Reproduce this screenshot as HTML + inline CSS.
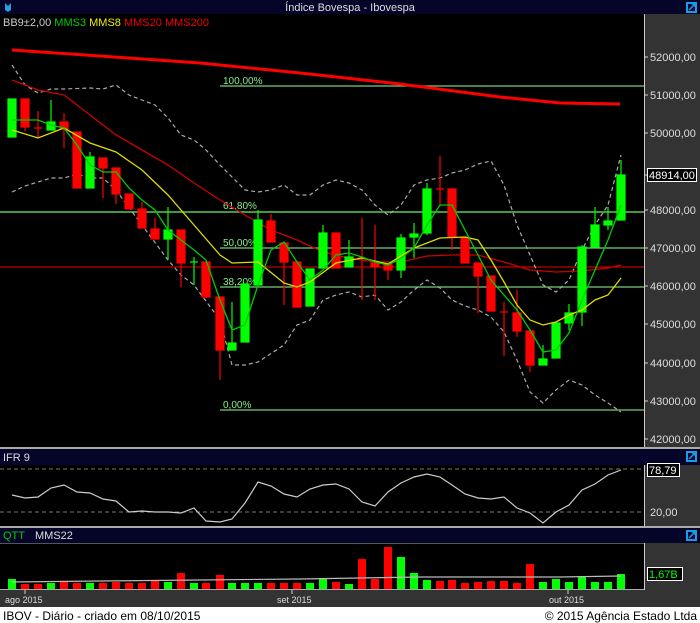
<!DOCTYPE html><html><head><meta charset="utf-8"><style>
body{margin:0;width:700px;height:623px;overflow:hidden;background:#000;font-family:"Liberation Sans",sans-serif}
svg{display:block}
svg text{font-family:"Liberation Sans",sans-serif}
</style></head><body>
<svg width="700" height="623" xmlns="http://www.w3.org/2000/svg">
<rect width="700" height="623" fill="#000"/>
<rect x="644" y="14" width="56" height="593" fill="#333"/>
<rect x="0" y="590" width="700" height="17" fill="#333"/>
<rect x="0" y="0" width="700" height="14" fill="#05052a"/>
<path d="M5 3 L5 10 L8 12 L11 10 L11 3 L8 6 Z" fill="#2a9fe0"/>
<text x="350" y="11" fill="#ddd" font-size="11" text-anchor="middle">Índice Bovespa - Ibovespa</text>
<rect x="686" y="2" width="11" height="11" fill="#1a9be8"/><rect x="688" y="4" width="7" height="7" fill="#05052a"/><path d="M689 10 L695 4 M692 4 L695 4 L695 7" stroke="#1a9be8" stroke-width="1.5" fill="none"/>
<text x="3" y="26" font-size="11"><tspan fill="#ccc">BB9±2,00 </tspan><tspan fill="#0c0"> MMS3 </tspan><tspan fill="#ee0"> MMS8 </tspan><tspan fill="#e00"> MMS20 </tspan><tspan fill="#e00"> MMS200</tspan></text>
<line x1="644.5" y1="14" x2="644.5" y2="590" stroke="#ccc"/>
<g stroke="#7c7" stroke-width="1.2">
<line x1="220" y1="86" x2="644" y2="86"/>
<line x1="0" y1="212" x2="644" y2="212" stroke="#5c5" stroke-width="1.5"/>
<line x1="220" y1="248" x2="644" y2="248"/>
<line x1="220" y1="287" x2="644" y2="287"/>
<line x1="220" y1="410" x2="644" y2="410"/>
</g>
<line x1="0" y1="267" x2="644" y2="267" stroke="#e00"/>
<g fill="#8e8" font-size="10"><text x="223" y="84">100,00%</text><text x="223" y="209">61,80%</text><text x="223" y="246">50,00%</text><text x="223" y="285">38,20%</text><text x="223" y="408">0,00%</text></g>
<polyline points="12,50 100,56 200,63 300,73 400,84 500,97 560,103 620,104" fill="none" stroke="#f00" stroke-width="3"/>
<polyline fill="none" stroke="#aaa" stroke-dasharray="4,3" stroke-width="1.2" points="12,65 25,85 38,93 51,89 64,89 90,88 103,89 116,85 129,95 142,100 155,105 168,118 181,135 194,140 206,150 220,165 232,177 245,190 258,192 271,190 284,185 297,195 310,195 323,185 336,180 349,183 362,190 375,205 388,215 401,205 414,185 427,180 440,178 452,173 465,170 478,164 491,161 504,185 517,225 530,255 543,285 556,292 569,280 582,250 595,225 608,205 621,155"/>
<polyline fill="none" stroke="#aaa" stroke-dasharray="4,3" stroke-width="1.2" points="12,192 25,186 38,182 51,178 64,178 77,174 90,178 103,178 116,190 142,225 168,260 181,275 194,285 220,320 232,365 245,365 258,362 284,345 297,325 310,320 323,300 336,295 349,292 362,297 375,295 388,310 401,302 414,290 427,280 440,288 452,300 465,306 478,310 491,317 504,332 517,360 530,392 543,403 556,390 569,380 582,385 595,395 608,403 621,412"/>
<polyline fill="none" stroke="#c00" stroke-width="1.3" points="12,80 38,90 64,95 90,115 116,135 142,150 168,165 194,183 220,200 245,215 271,230 297,240 323,252 349,258 375,262 401,262 427,256 452,255 478,255 504,262 530,270 556,272 582,271 608,268 621,265"/>
<g stroke-width="1.2">
<g fill="#0f0" stroke="#0f0">
<rect x="8" y="99" width="8" height="38"/><line x1="51" y1="100" x2="51" y2="130"/><rect x="47" y="122" width="8" height="8"/>
<rect x="86" y="157" width="8" height="31"/><line x1="90" y1="152" x2="90" y2="188"/>
<rect x="164" y="230" width="8" height="9"/><line x1="168" y1="207" x2="168" y2="260"/>
<rect x="228" y="343" width="8" height="7"/><line x1="232" y1="302" x2="232" y2="350"/>
<rect x="241" y="284" width="8" height="58"/>
<rect x="254" y="220" width="8" height="65"/><line x1="258" y1="210" x2="258" y2="285"/>
<rect x="306" y="269" width="8" height="37"/>
<rect x="319" y="233" width="8" height="35"/><line x1="323" y1="225" x2="323" y2="268"/>
<rect x="345" y="257" width="8" height="10"/><line x1="349" y1="240" x2="349" y2="267"/>
<rect x="397" y="238" width="8" height="32"/><line x1="401" y1="234" x2="401" y2="278"/>
<rect x="410" y="234" width="8" height="3"/><line x1="414" y1="223" x2="414" y2="258"/>
<rect x="423" y="189" width="8" height="44"/><line x1="427" y1="183" x2="427" y2="235"/>
<rect x="539" y="359" width="8" height="6"/><line x1="543" y1="345" x2="543" y2="365"/>
<rect x="552" y="323" width="8" height="35"/>
<rect x="565" y="313" width="8" height="10"/><line x1="569" y1="304" x2="569" y2="330"/>
<rect x="578" y="247" width="8" height="65"/><line x1="582" y1="245" x2="582" y2="326"/>
<rect x="591" y="225" width="8" height="22"/><line x1="595" y1="207" x2="595" y2="247"/>
<rect x="604" y="221" width="8" height="4"/><line x1="608" y1="207" x2="608" y2="230"/>
<rect x="617" y="175" width="8" height="45"/><line x1="621" y1="160" x2="621" y2="220"/>
<line x1="194" y1="257" x2="194" y2="285"/><line x1="190" y1="262" x2="198" y2="262"/>
<line x1="362" y1="218" x2="362" y2="300" stroke="#f00"/>
</g>
<g fill="#f00" stroke="#f00">
<rect x="21" y="99" width="8" height="28"/><line x1="25" y1="99" x2="25" y2="131"/>
<line x1="38" y1="111" x2="38" y2="138"/><line x1="34" y1="128" x2="42" y2="128"/>
<rect x="60" y="122" width="8" height="7"/><line x1="64" y1="113" x2="64" y2="148"/>
<rect x="73" y="132" width="8" height="56"/>
<rect x="99" y="158" width="8" height="10"/><line x1="103" y1="158" x2="103" y2="198"/>
<rect x="112" y="168" width="8" height="26"/><line x1="116" y1="168" x2="116" y2="204"/>
<rect x="125" y="194" width="8" height="15"/>
<rect x="138" y="209" width="8" height="19"/><line x1="142" y1="202" x2="142" y2="228"/>
<rect x="151" y="229" width="8" height="10"/><line x1="155" y1="218" x2="155" y2="239"/>
<rect x="177" y="230" width="8" height="33"/><line x1="181" y1="230" x2="181" y2="287"/>
<rect x="202" y="262" width="8" height="35"/><line x1="206" y1="262" x2="206" y2="298"/>
<rect x="216" y="297" width="8" height="53"/><line x1="220" y1="297" x2="220" y2="380"/>
<rect x="267" y="221" width="8" height="21"/><line x1="271" y1="214" x2="271" y2="242"/>
<rect x="280" y="243" width="8" height="19"/><line x1="284" y1="243" x2="284" y2="305"/>
<rect x="293" y="262" width="8" height="45"/>
<rect x="332" y="233" width="8" height="35"/>
<line x1="358" y1="258" x2="366" y2="258"/>
<rect x="371" y="263" width="8" height="4"/><line x1="375" y1="225" x2="375" y2="300"/>
<rect x="384" y="264" width="8" height="6"/><line x1="388" y1="264" x2="388" y2="280"/>
<line x1="440" y1="156" x2="440" y2="205"/><line x1="436" y1="189" x2="444" y2="189"/>
<rect x="448" y="189" width="8" height="48"/><line x1="452" y1="189" x2="452" y2="250"/>
<rect x="461" y="238" width="8" height="25"/>
<rect x="474" y="263" width="8" height="13"/><line x1="478" y1="263" x2="478" y2="313"/>
<rect x="487" y="276" width="8" height="35"/>
<line x1="504" y1="302" x2="504" y2="356"/><line x1="500" y1="312" x2="508" y2="312"/>
<rect x="513" y="313" width="8" height="18"/><line x1="517" y1="290" x2="517" y2="337"/>
<rect x="526" y="331" width="8" height="34"/><line x1="530" y1="331" x2="530" y2="372"/>
</g></g>
<polyline fill="none" stroke="#dd0" stroke-width="1.3" points="12,130 38,138 64,128 90,143 116,152 142,170 168,195 194,225 220,255 232,263 258,262 284,283 297,287 310,282 336,263 362,258 388,264 414,248 440,238 465,237 478,240 491,260 504,282 517,305 530,320 543,325 556,322 569,315 582,310 595,300 608,295 621,278"/>
<polyline fill="none" stroke="#0c0" stroke-width="1.3" points="12,120 25,120 38,120 51,125 64,128 77,145 90,165 103,172 116,172 129,188 142,200 155,210 168,230 181,240 194,250 206,260 220,300 232,330 245,325 258,285 271,250 284,242 297,262 310,280 323,270 336,255 349,253 362,257 375,262 388,265 401,258 414,248 427,225 440,205 452,205 465,230 478,255 491,280 504,295 517,310 530,330 543,352 556,350 569,333 582,300 595,270 608,240 621,205"/>
<g fill="#ddd" font-size="11">
<text x="650" y="61">52000,00</text><text x="650" y="99">51000,00</text><text x="650" y="137">50000,00</text><text x="650" y="214">48000,00</text><text x="650" y="252">47000,00</text><text x="650" y="290">46000,00</text><text x="650" y="328">45000,00</text><text x="650" y="367">44000,00</text><text x="650" y="405">43000,00</text><text x="650" y="443">42000,00</text>
</g>
<g stroke="#ccc"><line x1="644" y1="57" x2="648" y2="57"/><line x1="644" y1="95" x2="648" y2="95"/><line x1="644" y1="133" x2="648" y2="133"/><line x1="644" y1="210" x2="648" y2="210"/><line x1="644" y1="248" x2="648" y2="248"/><line x1="644" y1="286" x2="648" y2="286"/><line x1="644" y1="324" x2="648" y2="324"/><line x1="644" y1="363" x2="648" y2="363"/><line x1="644" y1="401" x2="648" y2="401"/><line x1="644" y1="439" x2="648" y2="439"/><line x1="644" y1="175" x2="648" y2="175"/></g>
<rect x="647.5" y="168.5" width="49" height="13" fill="#000" stroke="#fff"/><text x="649" y="179" fill="#fff" font-size="11">48914,00</text>
<rect x="0" y="447" width="700" height="2" fill="#aaa"/>
<rect x="0" y="449" width="700" height="16" fill="#05052a"/>
<text x="3" y="461" fill="#ddd" font-size="11">IFR 9</text>
<rect x="686" y="451" width="11" height="11" fill="#1a9be8"/><rect x="688" y="453" width="7" height="7" fill="#05052a"/><path d="M689 459 L695 453 M692 453 L695 453 L695 456" stroke="#1a9be8" stroke-width="1.5" fill="none"/>
<rect x="0" y="465" width="644" height="62" fill="#000"/>
<line x1="0" y1="469" x2="644" y2="469" stroke="#777" stroke-dasharray="4,3"/>
<line x1="0" y1="512" x2="644" y2="512" stroke="#777" stroke-dasharray="4,3"/>
<polyline fill="none" stroke="#ccc" stroke-width="1.2" points="12,495 25,498 38,497 51,488 64,485 77,492 90,493 103,499 116,501 129,512 142,511 155,512 168,512 181,513 194,508 206,521 220,522 232,519 245,503 258,482 271,486 284,494 297,497 310,489 323,485 336,484 349,489 362,502 375,506 388,492 401,483 414,477 427,474 440,477 452,485 465,494 478,498 491,499 504,497 517,508 530,513 543,523 556,512 569,505 582,490 595,484 608,475 621,470"/>
<line x1="644.5" y1="465" x2="644.5" y2="527" stroke="#ccc"/>
<rect x="647.5" y="463.5" width="32" height="13" fill="#000" stroke="#fff"/><text x="649" y="474" fill="#fff" font-size="11">78,79</text>
<text x="650" y="516" fill="#ddd" font-size="11">20,00</text>
<rect x="0" y="526" width="700" height="2" fill="#aaa"/>
<rect x="0" y="528" width="700" height="15" fill="#05052a"/>
<rect x="0" y="543" width="644" height="1" fill="#555"/>
<text x="3" y="539" font-size="11"><tspan fill="#0c0">QTT</tspan><tspan fill="#ddd" dx="10">MMS22</tspan></text>
<rect x="686" y="530" width="11" height="11" fill="#1a9be8"/><rect x="688" y="532" width="7" height="7" fill="#05052a"/><path d="M689 538 L695 532 M692 532 L695 532 L695 535" stroke="#1a9be8" stroke-width="1.5" fill="none"/>
<g fill="#0f0"><rect x="8" y="579" width="8" height="10"/><rect x="47" y="583" width="8" height="6"/><rect x="86" y="583" width="8" height="6"/><rect x="164" y="582" width="8" height="7"/><rect x="190" y="583" width="8" height="6"/><rect x="228" y="583" width="8" height="6"/><rect x="241" y="583" width="8" height="6"/><rect x="254" y="583" width="8" height="6"/><rect x="306" y="583" width="8" height="6"/><rect x="319" y="578" width="8" height="11"/><rect x="345" y="584" width="8" height="5"/><rect x="397" y="557" width="8" height="32"/><rect x="410" y="573" width="8" height="16"/><rect x="423" y="580" width="8" height="9"/><rect x="539" y="582" width="8" height="7"/><rect x="552" y="579" width="8" height="10"/><rect x="565" y="582" width="8" height="7"/><rect x="578" y="576" width="8" height="13"/><rect x="591" y="582" width="8" height="7"/><rect x="604" y="582" width="8" height="7"/><rect x="617" y="574" width="8" height="15"/></g>
<g fill="#f00"><rect x="21" y="584" width="8" height="5"/><rect x="34" y="584" width="8" height="5"/><rect x="60" y="582" width="8" height="7"/><rect x="73" y="583" width="8" height="6"/><rect x="99" y="583" width="8" height="6"/><rect x="112" y="582" width="8" height="7"/><rect x="125" y="583" width="8" height="6"/><rect x="138" y="583" width="8" height="6"/><rect x="151" y="580" width="8" height="9"/><rect x="177" y="573" width="8" height="16"/><rect x="202" y="583" width="8" height="6"/><rect x="216" y="575" width="8" height="14"/><rect x="267" y="583" width="8" height="6"/><rect x="280" y="583" width="8" height="6"/><rect x="293" y="583" width="8" height="6"/><rect x="332" y="582" width="8" height="7"/><rect x="358" y="559" width="8" height="30"/><rect x="371" y="579" width="8" height="10"/><rect x="384" y="547" width="8" height="42"/><rect x="436" y="581" width="8" height="8"/><rect x="448" y="580" width="8" height="9"/><rect x="461" y="583" width="8" height="6"/><rect x="474" y="582" width="8" height="7"/><rect x="487" y="581" width="8" height="8"/><rect x="500" y="581" width="8" height="8"/><rect x="513" y="583" width="8" height="6"/><rect x="526" y="564" width="8" height="25"/></g>
<polyline fill="none" stroke="#bbb" stroke-width="1.2" points="12,582 100,581 200,580 300,579 360,578 420,577 500,577 560,577 621,576"/>
<line x1="644.5" y1="543" x2="644.5" y2="590" stroke="#ccc"/>
<rect x="647.5" y="567.5" width="35" height="13" fill="#000" stroke="#fff"/><text x="649" y="578" fill="#0f0" font-size="11">1,67B</text>
<rect x="0" y="589" width="644" height="1" fill="#aaa"/>
<g stroke="#ccc"><line x1="25" y1="590" x2="25" y2="594"/><line x1="292" y1="590" x2="292" y2="594"/><line x1="568" y1="590" x2="568" y2="594"/></g>
<g fill="#ddd" font-size="9"><text x="5" y="603">ago 2015</text><text x="277" y="603">set 2015</text><text x="549" y="603">out 2015</text></g>
<rect x="0" y="607" width="700" height="16" fill="#fff"/>
<text x="3" y="620" fill="#000" font-size="12">IBOV - Diário - criado em 08/10/2015</text>
<text x="697" y="620" fill="#000" font-size="12" text-anchor="end">© 2015 Agência Estado Ltda</text>
</svg>
</body></html>
